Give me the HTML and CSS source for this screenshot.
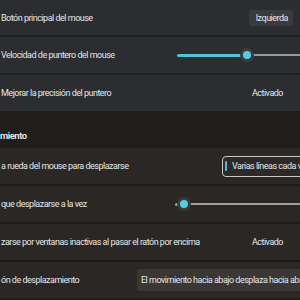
FILE: index.html
```html
<!DOCTYPE html>
<html lang="es">
<head>
<meta charset="UTF-8">
<title>Mouse</title>
<link rel="stylesheet" href="styles.css">
</head>
<body>
<div class="page">
    <div class="group cool">
        <div class="row first">
            <span class="label">Botón principal del mouse</span>
            <span class="select left-btn">Izquierda</span>
        </div>
        <div class="row">
            <span class="label">Velocidad de puntero del mouse</span>
            <div class="slider speed">
                <div class="fill" style="width: 65px"></div>
                <div class="thumb"></div>
                <div class="rest"></div>
            </div>
        </div>
        <div class="row">
            <span class="label">Mejorar la precisión del puntero</span>
            <span class="state">Activado</span>
        </div>
    </div>

    <div class="section">miento</div>

    <div class="group warm">
        <div class="row">
            <span class="label">a rueda del mouse para desplazarse</span>
            <div class="field"><span class="caret"></span>Varias líneas cada vez</div>
        </div>
        <div class="row">
            <span class="label">que desplazarse a la vez</span>
            <div class="slider lines">
                <div class="fill" style="width: 4px"></div>
                <div class="thumb"></div>
                <div class="rest"></div>
            </div>
        </div>
        <div class="row">
            <span class="label">zarse por ventanas inactivas al pasar el ratón por encima</span>
            <span class="state">Activado</span>
        </div>
        <div class="row">
            <span class="label">ón de desplazamiento</span>
            <span class="select direction">El movimiento hacia abajo desplaza hacia abajo</span>
        </div>
    </div>
</div>
</body>
</html>
```

FILE: styles.css
```css
body, html {
    margin: 0;
    width: 300px;
    height: 300px;
    overflow: hidden;
    background: #1e1d1c;
}

.page {
    font-family: Roboto, "Noto Sans", sans-serif;
    font-size: 9px;
    letter-spacing: -0.5px;
    color: #e6e6e6;
    display: flex;
    flex-direction: column;
}

.group {
    display: flex;
    flex-direction: column;
    gap: 2px;
}

.cool {
    background: #1f2124;
}

.warm {
    background: #1d1b1a;
}

.row {
    height: 36px;
    display: flex;
    align-items: center;
    padding-left: 1px;
    overflow: hidden;
    white-space: nowrap;
}

.cool .row {
    background: #2b2d30;
}

.warm .row {
    background: #2a2725;
}

.row.first {
    height: 35px;
}

.label {
    flex-shrink: 0;
}

.select, .state, .slider, .field {
    flex-shrink: 0;
    margin-left: auto;
}

.select {
    background: #393b3e;
    border-radius: 3px;
    height: 16px;
    line-height: 16px;
    padding: 0 5px 0 7px;
}

.left-btn {
    margin-right: 7px;
}

.direction {
    box-sizing: border-box;
    width: 172px;
    overflow: hidden;
    background: #3a3735;
    height: 22px;
    line-height: 22px;
    padding: 0 0 0 4px;
    margin-right: -9px;
}

.state {
    margin-right: 17px;
}

/* sliders */
.slider {
    display: flex;
    align-items: center;
    height: 14px;
    width: 124px;
    margin-right: -1px;
}

.lines {
    width: 126px;
}

.slider .fill {
    height: 3px;
    background: #4cc3d9;
    border-radius: 2px;
}

.slider .thumb {
    width: 8px;
    height: 8px;
    border-radius: 50%;
    background: #4fd0e6;
    border: 3px solid #3a3c3f;
    margin: 0 -2px;
    position: relative;
    z-index: 1;
}

.slider .rest {
    flex: 1;
    height: 2px;
    background: #9b9b9b;
}

.lines .thumb {
    border-color: #3b3836;
}

.lines .rest {
    background: #a09d9a;
}

/* text box */
.field {
    box-sizing: border-box;
    display: flex;
    align-items: center;
    height: 21px;
    width: 86px;
    margin-right: -8px;
    border: 1px solid #c9c7c4;
    border-radius: 4px;
    background: #2c2927;
    padding-left: 2px;
    overflow: hidden;
}

.caret {
    flex-shrink: 0;
    width: 2px;
    height: 10px;
    background: #46bfd6;
    border-radius: 1px;
    margin-right: 5px;
}

.section {
    height: 37px;
    box-sizing: border-box;
    padding-top: 19px;
    font-weight: 600;
    font-size: 9.5px;
    background: #1f1e1d;
    color: #ececec;
}
```
